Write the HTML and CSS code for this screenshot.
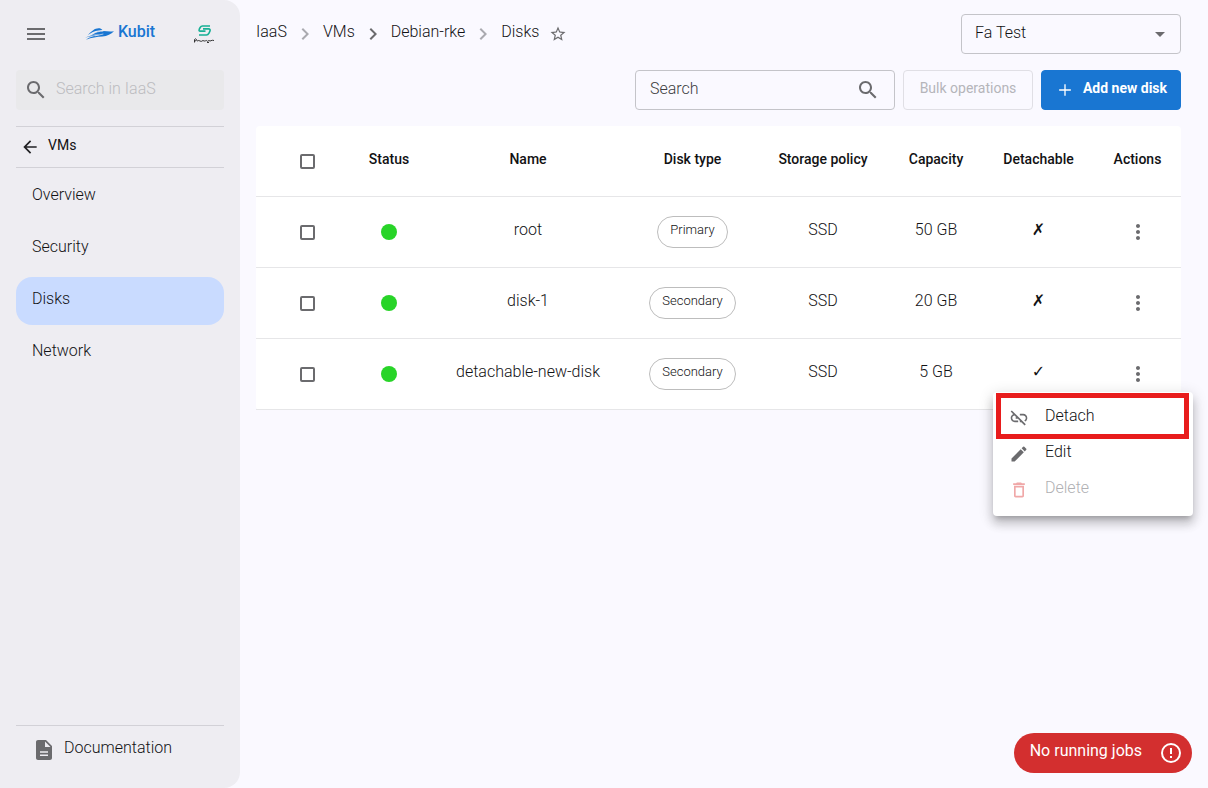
FILE: index.html
```html
<!DOCTYPE html>
<html lang="en">
<head>
<meta charset="utf-8">
<meta name="viewport" content="width=device-width, initial-scale=1">
<title>Kubit - Disks</title>
<link rel="stylesheet" href="styles.css">
</head>
<body>
<svg class="sprite" aria-hidden="true">
  <symbol id="i-search" viewBox="0 0 24 24"><path d="M15.5 14h-.79l-.28-.27C15.41 12.59 16 11.11 16 9.5 16 5.91 13.09 3 9.5 3S3 5.91 3 9.5 5.91 16 9.5 16c1.61 0 3.09-.59 4.23-1.57l.27.28v.79l5 4.99L20.49 19l-4.99-5zm-6 0C7.01 14 5 11.99 5 9.5S7.01 5 9.5 5 14 7.01 14 9.5 11.99 14 9.5 14z"/></symbol>
  <symbol id="i-next" viewBox="0 0 24 24"><path d="M10 6 8.59 7.41 13.17 12l-4.58 4.59L10 18l6-6z"/></symbol>
  <symbol id="i-more" viewBox="0 0 24 24"><path d="M12 8c1.1 0 2-.9 2-2s-.9-2-2-2-2 .9-2 2 .9 2 2 2zm0 2c-1.100 0-2 .9-2 2s.9 2 2 2 2-.9 2-2-.9-2-2-2zm0 6c-1.100 0-2 .9-2 2s.9 2 2 2 2-.9 2-2-.9-2-2-2z"/></symbol>
</svg>
<div class="app">
  <aside class="sidebar">
    <div class="brand">
      <button class="icon-button" aria-label="Menu"><svg class="icon" viewBox="0 0 24 24"><path d="M3 18h18v-2H3zm0-5h18v-2H3zm0-7v2h18V6z"/></svg></button>
      <a class="logo" href="#">
        <svg class="logo-mark" viewBox="0 0 30 14"><path d="M3 8C7 4 10 1 14 1c2 0 3 .6 4 1.800L14 3.500C10 3.800 6 6 3 8z"/><path d="M7 8c4-3 8-4 12-4 4 .3 7 .6 11 .2-3 3-7 5-12 5.400C12 10 7 10.500 1 13c3-3 8-4 14-5-3-.8-5-.6-8 0z"/><path d="M0 11c5-3 9-3.500 15-3.300C9 8.500 5 9 0 11z"/><path d="M8 7c3-2 7-3 11-3M10 9l9-2" fill="none" stroke="#eeedf2" stroke-width=".7"/></svg>
        <span class="label">Kubit</span>
      </a>
      <svg class="tenant" viewBox="0 0 24 20" aria-label="Tenant"><path d="M18 2H10.500Q9 2 8.200 3.500L7.300 5.200Q6.500 7.100 8.200 7.100H13.500M11 4.900H16.500Q18.700 4.900 18 6.900L17 9.200Q16 11 14.500 11H7" fill="none" stroke="#17b095" stroke-width="1.600"/><path d="M2.500 18.500V15.500q1.500-1.500 2 0T2.500 17M5 17q2-1 3 0t3-.5q1 1 2.500.3t2 .5l1.500-.8q1 1 2 .2t3-.2M15 18.500h2" fill="none" stroke="#222" stroke-width=".9"/></svg>
    </div>
    <label class="side-search">
      <svg class="icon"><use href="#i-search"/></svg>
      <input class="side-input" type="search" placeholder="Search in IaaS" aria-label="Search in IaaS">
    </label>
    <a class="back" href="#"><svg class="icon icon-sm" viewBox="0 0 24 24"><path d="M20 11H7.830l5.590-5.590L12 4l-8 8 8 8 1.410-1.410L7.830 13H20z"/></svg><span class="label">VMs</span></a>
    <nav class="nav">
      <a class="nav-item" href="#"><span class="label">Overview</span></a>
      <a class="nav-item" href="#"><span class="label">Security</span></a>
      <a class="nav-item active" href="#"><span class="label">Disks</span></a>
      <a class="nav-item" href="#"><span class="label">Network</span></a>
    </nav>
    <a class="docs" href="#"><svg class="icon" viewBox="0 0 24 24"><path d="M14 2H6c-1.100 0-2 .9-2 2v16c0 1.100.9 2 2 2h12c1.100 0 2-.9 2-2V8zm2 16H8v-1.600h8zm0-3.200H8v-1.600h8zM13 9V3.500L18.500 9z"/></svg><span class="label">Documentation</span></a>
  </aside>

  <main class="main">
    <header class="topbar">
      <nav class="crumbs" aria-label="Breadcrumb">
        <a class="crumb" href="#">IaaS</a><svg class="icon sep"><use href="#i-next"/></svg>
        <a class="crumb" href="#">VMs</a><svg class="icon"><use href="#i-next"/></svg>
        <a class="crumb" href="#">Debian-rke</a><svg class="icon sep"><use href="#i-next"/></svg>
        <a class="crumb" href="#">Disks</a>
        <button class="icon-button star" aria-label="Favorite"><svg class="icon icon-xs" viewBox="0 0 24 24"><path d="m22 9.240-7.190-.62L12 2 9.190 8.630 2 9.240l5.460 4.730L5.820 21 12 17.270 18.180 21l-1.630-7.030zM12 15.400l-3.760 2.270 1-4.280-3.320-2.880 4.380-.38L12 6.100l1.710 4.040 4.380.38-3.320 2.880 1 4.280z"/></svg></button>
      </nav>
      <div class="project">
        <select class="project-select" aria-label="Project"><option>Fa Test</option></select>
        <svg class="icon project-arrow" viewBox="0 0 24 24"><path d="m7 10 5 5 5-5z"/></svg>
      </div>
    </header>
    <div class="toolbar">
      <label class="search">
        <input class="search-input" type="search" placeholder="Search" aria-label="Search">
        <svg class="icon"><use href="#i-search"/></svg>
      </label>
      <button class="button bulk" disabled><span class="label">Bulk operations</span></button>
      <button class="button add"><svg class="icon icon-sm" viewBox="0 0 24 24"><path d="M19 12.800h-6.200V19h-1.600v-6.200H5v-1.600h6.200V5h1.600v6.200H19z"/></svg><span class="label">Add new disk</span></button>
    </div>
    <table class="table">
      <colgroup><col class="c-check"><col class="c-status"><col class="c-name"><col class="c-type"><col class="c-policy"><col class="c-capacity"><col class="c-detach"><col class="c-actions"></colgroup>
      <thead>
        <tr><th class="pick"><input class="check" type="checkbox" aria-label="Select all"></th><th><span class="label">Status</span></th><th><span class="label">Name</span></th><th><span class="label">Disk type</span></th><th><span class="label">Storage policy</span></th><th><span class="label">Capacity</span></th><th><span class="label">Detachable</span></th><th><span class="label">Actions</span></th></tr>
      </thead>
      <tbody>
        <tr><td class="pick"><input class="check" type="checkbox" aria-label="Select root"></td><td><span class="dot"></span></td><td><span class="label">root</span></td><td><span class="chip"><span class="label">Primary</span></span></td><td><span class="label">SSD</span></td><td><span class="label">50 GB</span></td><td><span class="label mark">✗</span></td><td><button class="icon-button" aria-label="Actions for root"><svg class="icon"><use href="#i-more"/></svg></button></td></tr>
        <tr><td class="pick"><input class="check" type="checkbox" aria-label="Select disk-1"></td><td><span class="dot"></span></td><td><span class="label">disk-1</span></td><td><span class="chip"><span class="label">Secondary</span></span></td><td><span class="label">SSD</span></td><td><span class="label">20 GB</span></td><td><span class="label mark">✗</span></td><td><button class="icon-button" aria-label="Actions for disk-1"><svg class="icon"><use href="#i-more"/></svg></button></td></tr>
        <tr><td class="pick"><input class="check" type="checkbox" aria-label="Select detachable-new-disk"></td><td><span class="dot"></span></td><td><span class="label">detachable-new-disk</span></td><td><span class="chip"><span class="label">Secondary</span></span></td><td><span class="label">SSD</span></td><td><span class="label">5 GB</span></td><td><span class="label mark">✓</span></td><td class="menu-anchor"><button class="icon-button" aria-label="Actions for detachable-new-disk"><svg class="icon"><use href="#i-more"/></svg></button>
          <div class="menu" role="menu">
            <button class="menu-item" role="menuitem"><svg class="icon icon-sm" viewBox="0 0 24 24"><path d="M17 7h-4v1.900h4c1.710 0 3.100 1.390 3.100 3.100 0 1.270-.77 2.370-1.870 2.840l1.400 1.400C21.050 15.360 22 13.790 22 12c0-2.760-2.240-5-5-5zM2 4.270l3.110 3.110C3.290 8.120 2 9.910 2 12c0 2.760 2.240 5 5 5h4v-1.900H7c-1.710 0-3.100-1.390-3.100-3.100 0-1.590 1.210-2.900 2.760-3.070L8.730 11H8v2h2.730L13 15.270V17h1.730l4.010 4.010 1.410-1.410L3.410 2.860z"/></svg><span class="label">Detach</span></button>
            <button class="menu-item" role="menuitem"><svg class="icon icon-sm" viewBox="0 0 24 24"><path d="M3 17.250V21h3.750L17.810 9.940l-3.750-3.750zM20.710 7.040c.39-.39.39-1.020 0-1.410l-2.340-2.340a1 1 0 0 0-1.410 0l-1.830 1.830 3.750 3.750z"/></svg><span class="label">Edit</span></button>
            <button class="menu-item danger" role="menuitem" disabled><svg class="icon icon-sm" viewBox="0 0 24 24"><path d="M16 9v10H8V9h8m-1.500-6h-5l-1 1H5v2h14V4h-3.500zM18 7H6v12c0 1.100.9 2 2 2h8c1.100 0 2-.9 2-2z"/></svg><span class="label">Delete</span></button>
            <span class="highlight"></span>
          </div></td></tr>
      </tbody>
    </table>
  </main>
  <button class="jobs"><span class="label">No running jobs</span><svg class="icon" viewBox="0 0 24 24"><path d="M11 15h2v2h-2zm0-8h2v6h-2zm1-5a10 10 0 1 0 0 20 10 10 0 0 0 0-20zm0 18a8 8 0 1 1 0-16 8 8 0 0 1 0 16z"/></svg></button>
</div>
</body>
</html>
```
FILE: styles.css
```css
* { box-sizing: border-box; }
body {
  margin: 0;
  background: #faf9ff;
  color: #121214;
  font: 300 16px/24px Roboto, "Liberation Sans", sans-serif;
}
a { color: inherit; text-decoration: none; }
button, input, select { margin: 0; font: inherit; color: inherit; }
button { border: 0; padding: 0; background: none; }

.sprite { position: absolute; width: 0; height: 0; }
.icon { display: block; flex: none; width: 24px; height: 24px; fill: #6b6b6e; }
.icon-sm { width: 20px; height: 20px; }
.icon-xs { width: 18px; height: 18px; }
.icon-button { display: inline-flex; vertical-align: middle; }
/* text rides slightly above the icon centre line */
.label { display: inline-block; padding-bottom: 4px; }

.app { display: flex; min-height: 100vh; }

.sidebar {
  display: flex;
  flex-direction: column;
  flex: none;
  width: 240px;
  padding: 14px 16px;
  background: #eeedf2;
  border-radius: 0 16px 16px 0;
}
.brand { display: flex; align-items: center; justify-content: space-between; height: 40px; padding: 0 8px; }
.logo { display: flex; align-items: center; gap: 4px; color: #1976d2; font-weight: 500; }
.logo-mark { width: 29px; height: 14px; fill: #1976d2; }
.tenant { width: 24px; height: 20px; }
.side-search {
  display: flex;
  align-items: center;
  gap: 8px;
  height: 40px;
  margin: 16px 0;
  padding: 0 8px;
  background: #e9e9eb;
  border-radius: 4px;
}
.side-input, .search-input {
  flex: 1;
  min-width: 0;
  height: 100%;
  padding: 0 0 4px;
  border: 0;
  outline: 0;
  background: none;
  appearance: none;
}
.side-input::placeholder { color: #bcbcc0; opacity: 1; }
.search-input::placeholder { color: #3c3c40; opacity: 1; }
.back {
  display: flex;
  align-items: center;
  gap: 8px;
  height: 42px;
  padding: 0 4px;
  border: solid #d2d1d7;
  border-width: 1px 0;
  font-size: 14px;
  font-weight: 400;
}
.back .icon { fill: #212124; }
.nav { display: flex; flex-direction: column; gap: 4px; padding-top: 5px; }
.nav-item { display: flex; align-items: center; height: 48px; padding: 0 16px; border-radius: 16px; }
.active { background: #c9dbff; }
.docs {
  display: flex;
  align-items: center;
  gap: 8px;
  height: 49px;
  margin-top: auto;
  padding: 0 16px;
  border-top: 1px solid #d2d1d7;
}

.main { flex: 1; min-width: 0; padding: 14px 27px 16px 16px; }
.topbar { display: flex; align-items: center; justify-content: space-between; height: 40px; }
.crumbs { display: flex; align-items: center; gap: 6px; }
.crumb { padding-bottom: 4px; }
.sep { fill: #aaaab0; }
.star { padding-left: 4px; }
.project { position: relative; width: 220px; }
.project-select {
  display: block;
  width: 100%;
  height: 40px;
  padding: 0 32px 2px 13px;
  border: 1px solid #c4c4c9;
  border-radius: 4px;
  background: none;
  appearance: none;
}
.project-arrow { position: absolute; top: 8px; right: 9px; pointer-events: none; }
.toolbar { display: flex; justify-content: flex-end; gap: 8px; margin: 16px 0; }
.search {
  display: flex;
  align-items: center;
  width: 260px;
  height: 40px;
  padding: 0 14px;
  border: 1px solid #c4c4c9;
  border-radius: 4px;
}
.button {
  display: flex;
  align-items: center;
  justify-content: center;
  gap: 8px;
  height: 40px;
  padding: 0 12px;
  border: 1px solid #e0dfe5;
  border-radius: 4px;
  font-size: 14px;
}
.bulk { min-width: 130px; color: #b5b5ba; font-weight: 400; }
.add { min-width: 140px; border-color: #1976d2; background: #1976d2; color: #fff; font-weight: 700; }
.add .icon { fill: #fff; }

.table { width: 100%; table-layout: fixed; border-spacing: 0; background: #fff; border-radius: 4px; }
.c-check { width: 94px; }
.c-status { width: 78px; }
.c-name { width: 200px; }
.c-type { width: 129px; }
.c-policy { width: 132px; }
.c-capacity { width: 94px; }
.c-detach { width: 111px; }
.c-actions { width: 87px; }
.table th, .table td { height: 71px; padding: 0; border-bottom: 1px solid #e6e6e8; text-align: center; vertical-align: middle; }
.table th { font-size: 14px; font-weight: 500; }
.table .pick { padding-left: 8px; }
.check {
  display: block;
  width: 15px;
  height: 15px;
  margin: 0 auto;
  border: 2px solid #6b6b6e;
  border-radius: 2px;
  appearance: none;
}
.dot { display: block; width: 16px; height: 16px; margin: 0 auto; border-radius: 50%; background: #28d428; }
.chip {
  display: inline-flex;
  align-items: center;
  height: 32px;
  padding: 0 12px;
  border: 1px solid #bdbdbd;
  border-radius: 16px;
  font-size: 13px;
  vertical-align: middle;
}
.mark { font-family: "DejaVu Sans", sans-serif; font-weight: 700; }

.menu-anchor { position: relative; }
.menu {
  position: absolute;
  top: 53px;
  right: -12px;
  z-index: 1;
  width: 200px;
  padding: 8px 0;
  border-radius: 4px;
  background: #fff;
  box-shadow: 0 5px 5px -3px rgba(0, 0, 0, .2), 0 8px 10px 1px rgba(0, 0, 0, .14), 0 3px 14px 2px rgba(0, 0, 0, .12);
}
.menu-item { display: flex; align-items: center; gap: 16px; width: 100%; height: 36px; padding: 0 16px; }
.danger { color: #b0b0b3; }
.danger .icon { fill: #f0a8a8; }
.highlight { position: absolute; inset: 1px 4px auto 3px; height: 46px; border: 5px solid #e81c1c; pointer-events: none; }

.jobs {
  position: fixed;
  right: 16px;
  bottom: 15px;
  display: flex;
  align-items: center;
  gap: 17px;
  height: 40px;
  padding: 0 9px 0 16px;
  border-radius: 20px;
  background: #d32f2f;
  color: #fff;
  font-weight: 400;
}
.jobs .icon { fill: #fff; }
```
